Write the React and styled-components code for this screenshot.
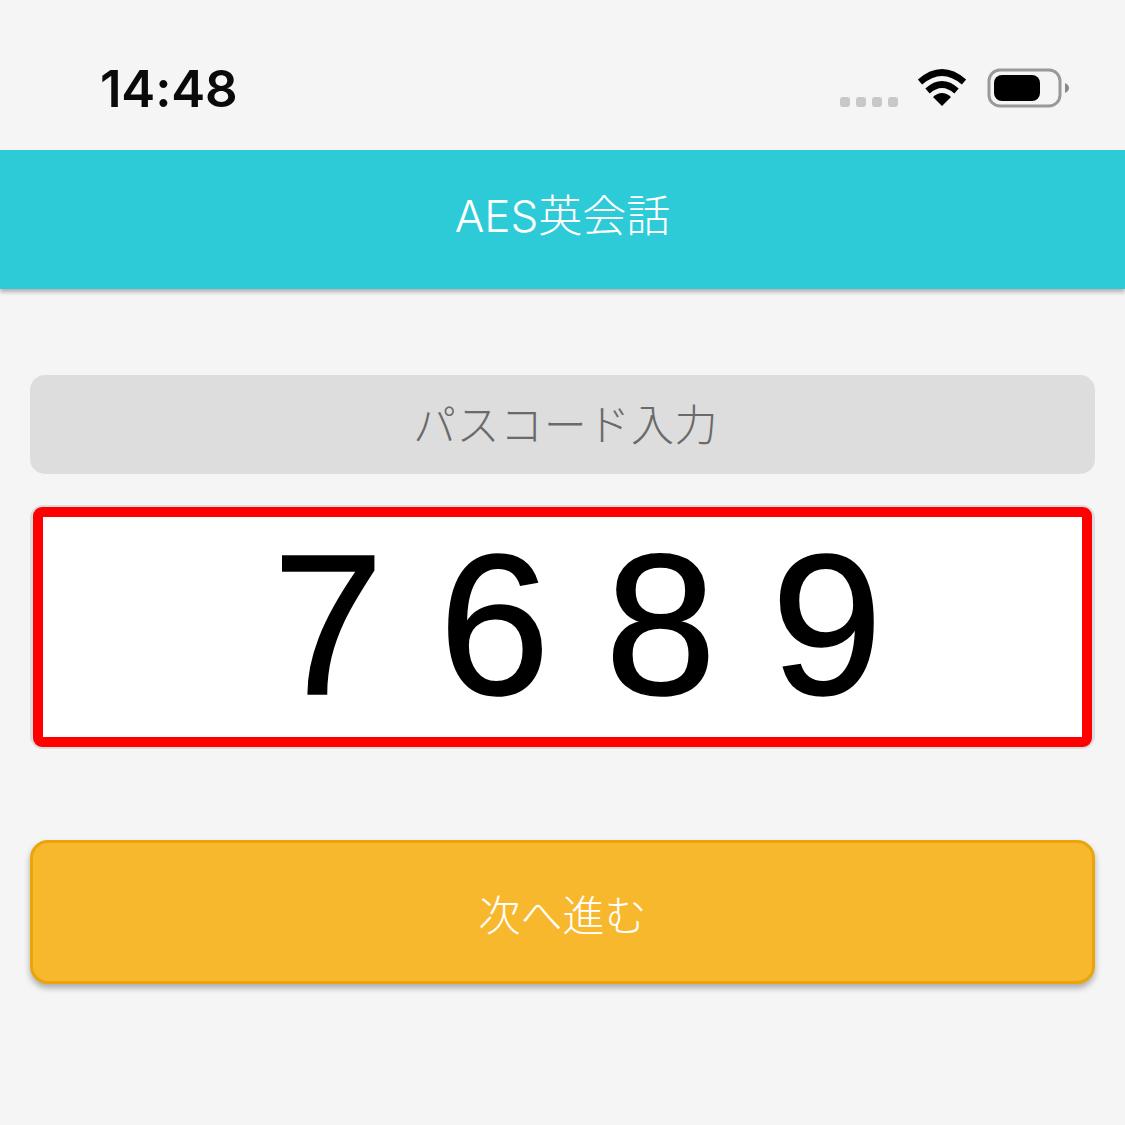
import React from 'react';
import styled, { createGlobalStyle } from 'styled-components';

const GlobalStyle = createGlobalStyle`
  html, body {
    margin: 0;
    padding: 0;
    background: #f5f5f5;
  }
`

const Page = styled.div`
  width: 1125px;
  height: 1125px;
  overflow: hidden;
  background: #f5f5f5;
  font-family: "Liberation Sans", "Noto Sans CJK JP", sans-serif;
`

const StatusBar = styled.div`
  height: 150px;
  box-sizing: border-box;
  display: flex;
  align-items: center;
  justify-content: space-between;
  padding: 52px 54px 26px 100px;
`

const Clock = styled.span`
  font-family: Inter, sans-serif;
  font-size: 51px;
  font-weight: 600;
  letter-spacing: -0.2px;
  color: #0a0a0a;
`

const StatusIcons = styled.div`
  display: flex;
  align-items: center;
`

const Signal = styled.div`
  display: flex;
  gap: 6px;
  margin-top: 27px;
  margin-right: 19px;
`

const SignalDot = styled.span`
  width: 10px;
  height: 10px;
  border-radius: 3px;
  background: #c8c8c8;
`

const Battery = styled.svg`
  margin-left: 20px;
`

const Header = styled.header`
  height: 139px;
  box-sizing: border-box;
  padding-bottom: 13px;
  display: flex;
  align-items: center;
  justify-content: center;
  background: #2dcbd8;
  box-shadow: 0 3px 4px rgba(0, 0, 0, 0.28);
  color: #fff;
  font-family: Inter, "Noto Sans CJK JP", sans-serif;
  font-size: 44px;
  font-weight: 300;
`

const Content = styled.main`
  display: flex;
  flex-direction: column;
  padding: 86px 30px 0;
`

const Label = styled.div`
  height: 99px;
  box-sizing: border-box;
  padding-bottom: 5px;
  padding-left: 6px;
  display: flex;
  align-items: center;
  justify-content: center;
  border-radius: 15px;
  background: #dddddd;
  color: #6a6a6a;
  font-size: 43px;
  font-weight: 300;
  letter-spacing: 0.6px;
`

const CodeBox = styled.div`
  height: 244px;
  margin-top: 31px;
  box-sizing: border-box;
  padding: 2px 3px;
  border-radius: 13px;
  background: #dddddd;
`

const CodeField = styled.div`
  height: 100%;
  box-sizing: border-box;
  display: flex;
  align-items: center;
  justify-content: center;
  padding-left: 85px;
  padding-bottom: 5px;
  border: 10px solid #ff0000;
  border-radius: 9px;
  background: #fff;
  color: #000;
  font-family: "Liberation Sans", sans-serif;
  font-size: 200px;
  letter-spacing: 55px;
  line-height: 1;
  -webkit-text-stroke: 1.5px #000;
`

const NextButton = styled.button`
  height: 144px;
  margin-top: 91px;
  display: flex;
  align-items: center;
  justify-content: center;
  border: 3px solid #eba50c;
  border-radius: 18px;
  background: #f7b82e;
  box-shadow: 0 4px 6px rgba(0, 0, 0, 0.3);
  color: #fff;
  font-family: inherit;
  font-size: 42px;
  font-weight: 300;
`

const WifiIcon = () => (
  <svg width="50" height="40" viewBox="0 0 50 40">
    <path d="M25 38 L16 29 Q25 21 34 29 Z" fill="#000" />
    <path d="M10.5 23 Q25 10 39.5 23" fill="none" stroke="#000" strokeWidth="6.5" />
    <path d="M3 14 Q25 -5 47 14" fill="none" stroke="#000" strokeWidth="6.5" />
  </svg>
);

const BatteryIcon = () => (
  <Battery width="84" height="40" viewBox="0 0 84 40">
    <rect x="2" y="2" width="71" height="36" rx="11" fill="none" stroke="#999" strokeWidth="3" />
    <rect x="7" y="7" width="46" height="26" rx="8" fill="#000" />
    <path d="M78 15 Q82 17 82 20 Q82 23 78 25 Z" fill="#888" />
  </Battery>
);

const App = () => {
  return (
    <Page>
      <GlobalStyle />
      <StatusBar>
        <Clock>14:48</Clock>
        <StatusIcons>
          <Signal>
            <SignalDot />
            <SignalDot />
            <SignalDot />
            <SignalDot />
          </Signal>
          <WifiIcon />
          <BatteryIcon />
        </StatusIcons>
      </StatusBar>
      <Header>AES英会話</Header>
      <Content>
        <Label>パスコード入力</Label>
        <CodeBox>
          <CodeField>7689</CodeField>
        </CodeBox>
        <NextButton>次へ進む</NextButton>
      </Content>
    </Page>
  )
}

export default App
